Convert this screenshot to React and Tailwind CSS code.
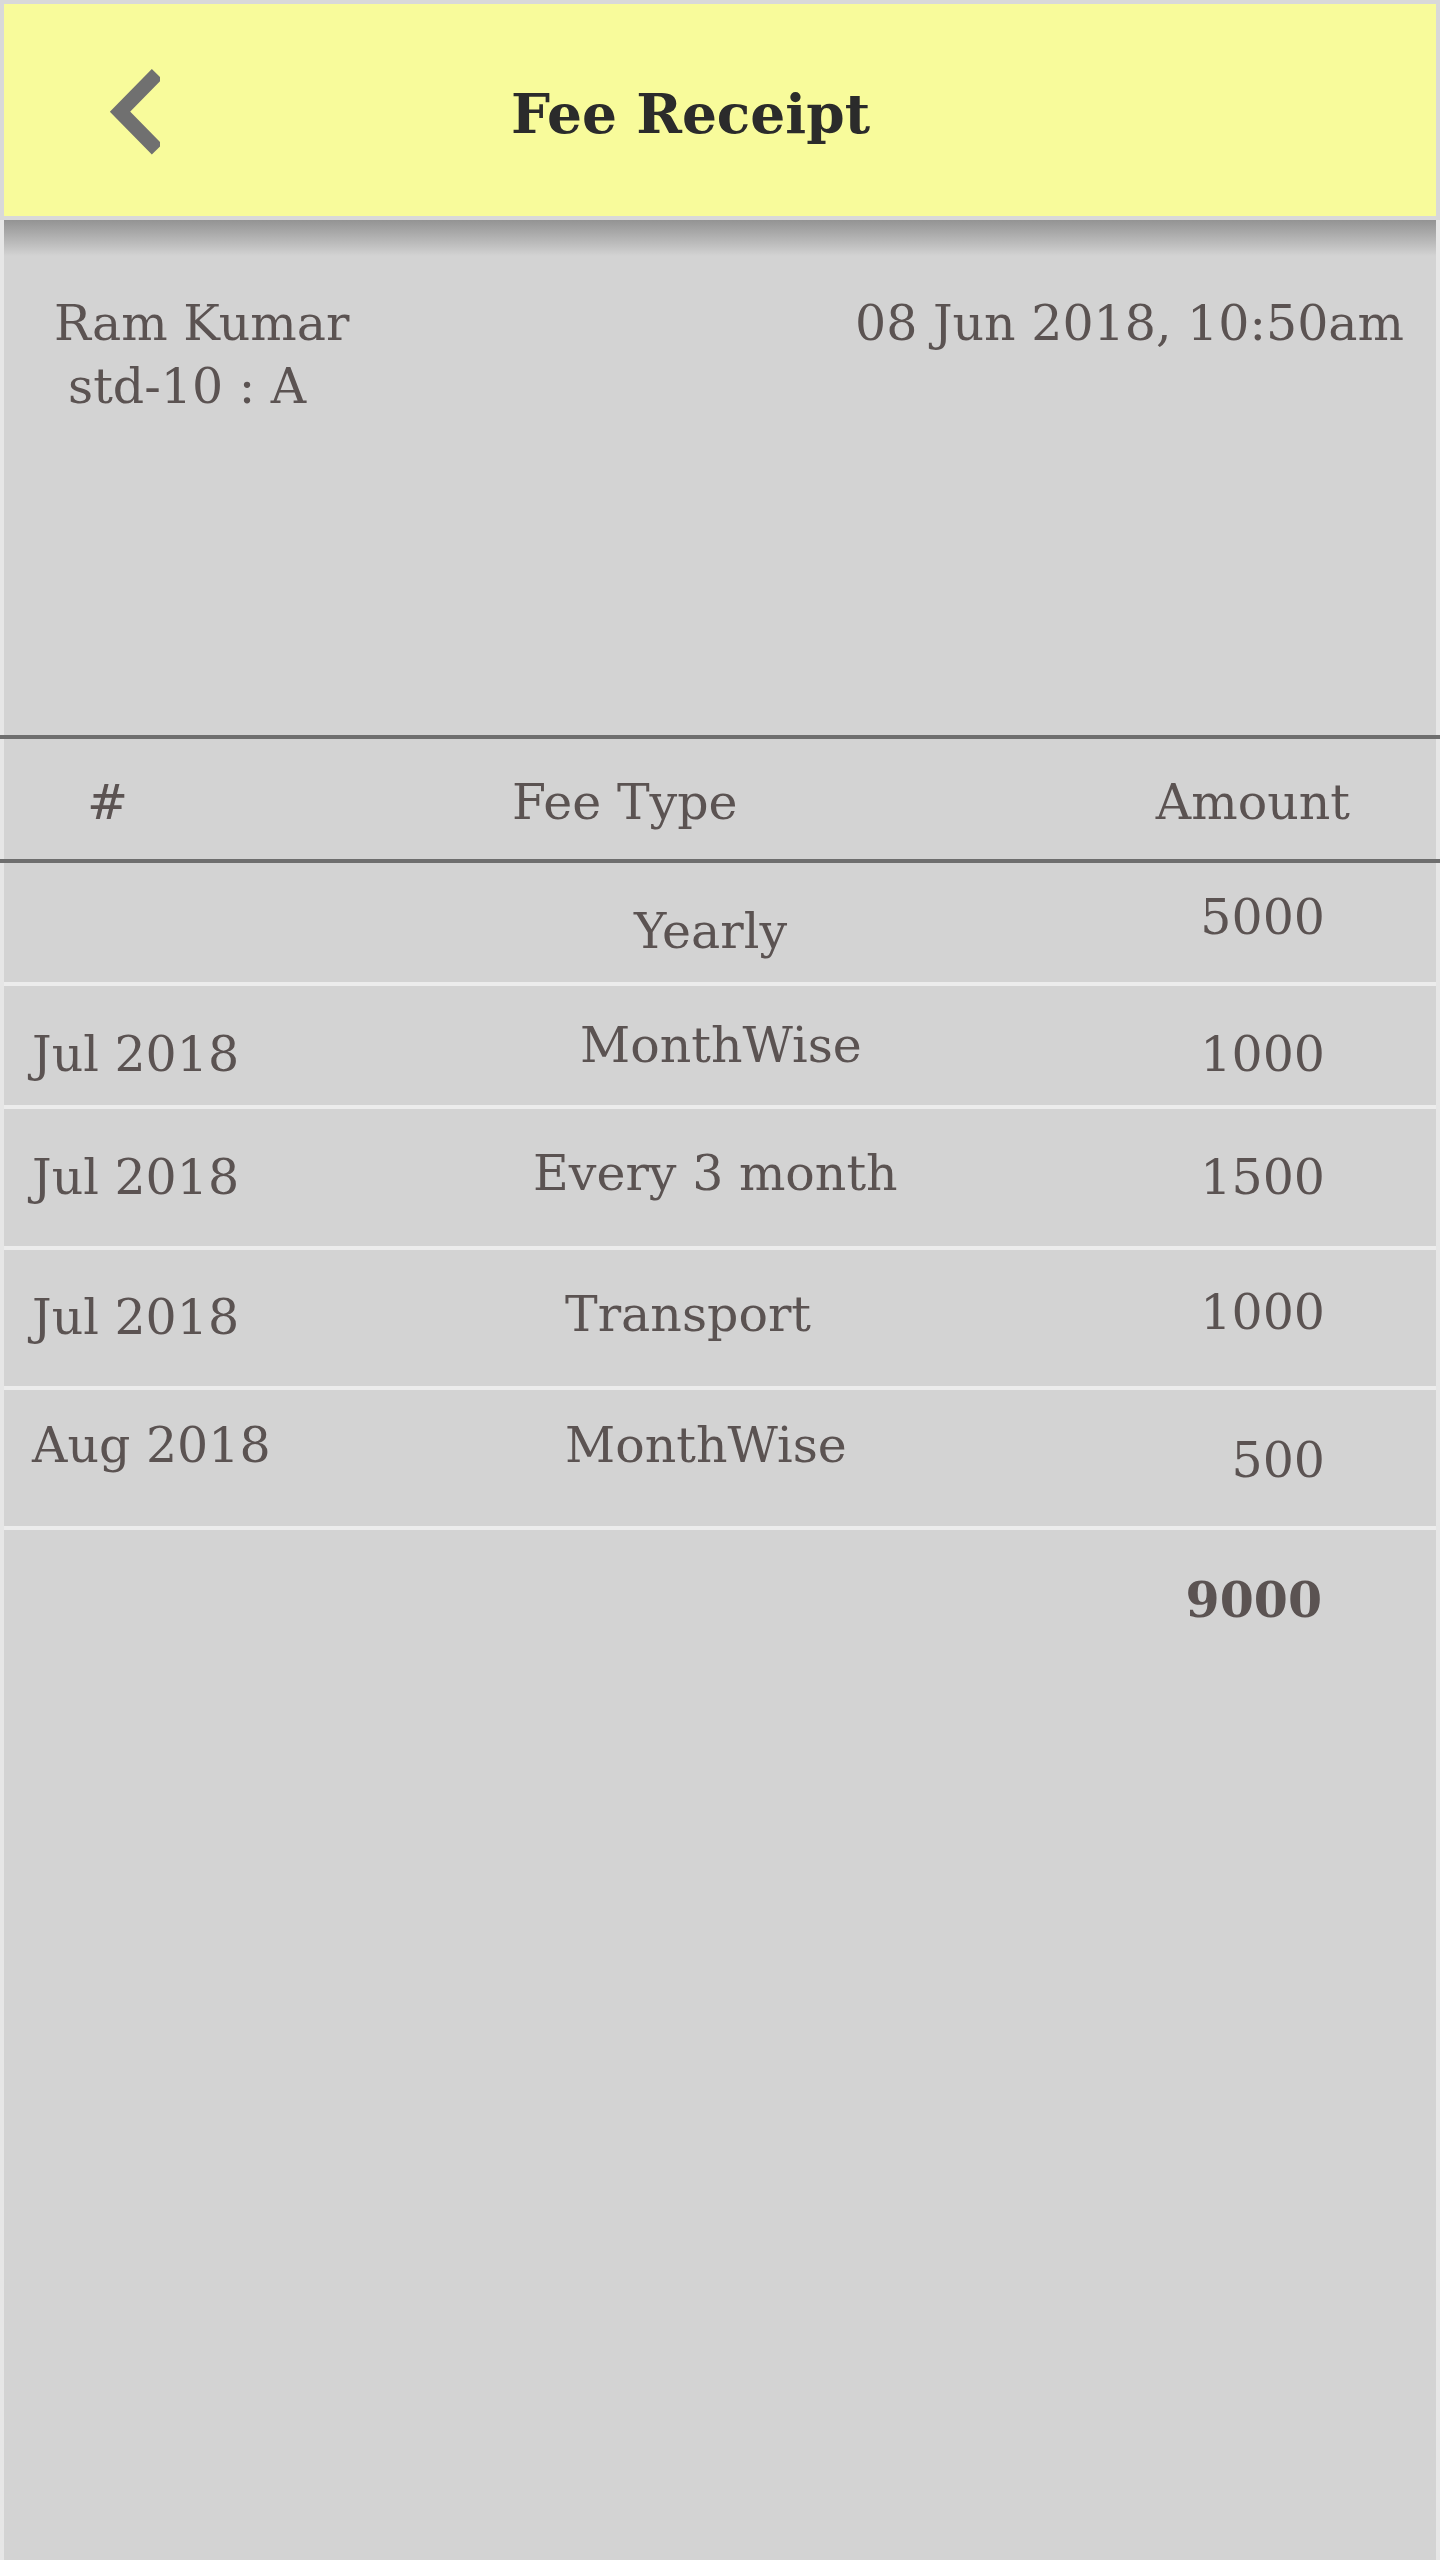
import React from "react";

const rows = [
  { left: "", mid: "Yearly", amt: "5000", h: "h-[119px]", lp: "pt-[44px]", mp: "pt-[44px] pl-[190px]", ap: "pt-[30px]" },
  { left: "Jul 2018", mid: "MonthWise", amt: "1000", h: "h-[119px]", lp: "pt-[44px]", mp: "pt-[35px] pl-[136px]", ap: "pt-[44px]" },
  { left: "Jul 2018", mid: "Every 3 month", amt: "1500", h: "h-[137px]", lp: "pt-[44px]", mp: "pt-[40px] pl-[89px]", ap: "pt-[44px]" },
  { left: "Jul 2018", mid: "Transport", amt: "1000", h: "h-[136px]", lp: "pt-[43px]", mp: "pt-[40px] pl-[121px]", ap: "pt-[38px]" },
  { left: "Aug 2018", mid: "MonthWise", amt: "500", h: "h-[136px]", lp: "pt-[31px]", mp: "pt-[31px] pl-[121px]", ap: "pt-[46px]" },
];

export default function App() {
  return (
    <div className="min-h-[2560px] bg-[#e6e6e6] font-['DejaVu_Serif',serif] text-[#5b5352]">
      {/* Header */}
      <div className="bg-[#d9d9d9] px-[4px] pt-[4px] pb-[4px]">
        <header className="h-[212px] bg-[#f8fb9b] flex items-center">
          <svg
            className="ml-[96px] shrink-0"
            width="60"
            height="100"
            viewBox="0 0 60 100"
            fill="none"
          >
            <polyline
              points="57,14 20,51.7 57,89.4"
              stroke="#707070"
              strokeWidth="14.5"
              strokeLinejoin="miter"
              strokeLinecap="butt"
            />
          </svg>
          <h1 className="ml-[351px] mt-[6px] text-[55px] leading-none font-bold text-[#2b2b2b] whitespace-nowrap">
            Fee Receipt
          </h1>
        </header>
      </div>

      <div className="mx-[4px] bg-[#d3d3d3] min-h-[2340px]">
        {/* shadow */}
        <div className="h-[36px] bg-linear-to-b from-[#939393] to-[#d3d3d3]" />

        {/* Info */}
        <div className="h-[479px] flex justify-between items-start pt-[36px] text-[49px] leading-[63px]">
          <div className="pl-[50px]">
            <div>Ram Kumar</div>
            <div className="pl-[14px]">std-10 : A</div>
          </div>
          <div className="pr-[32px] whitespace-nowrap">08 Jun 2018, 10:50am</div>
        </div>

        {/* Table top line */}
        <div className="-mx-[4px] h-[4px] bg-[#6e6e6e]" />

        {/* Header row */}
        <div className="h-[120px] flex text-[49px] leading-none">
          <div className="w-[440px] pl-[83px] pt-[39px]">#</div>
          <div className="flex-1 pl-[68px] pt-[39px]">Fee Type</div>
          <div className="w-[400px] text-right pr-[86px] pt-[39px]">Amount</div>
        </div>

        <div className="-mx-[4px] h-[4px] bg-[#6e6e6e]" />

        {rows.map((r, i) => (
          <React.Fragment key={i}>
            <div className={`${r.h} flex text-[49px] leading-none whitespace-nowrap`}>
              <div className={`w-[440px] pl-[28px] ${r.lp}`}>{r.left}</div>
              <div className={`flex-1 ${r.mp}`}>{r.mid}</div>
              <div className={`w-[400px] text-right pr-[111px] ${r.ap}`}>{r.amt}</div>
            </div>
            <div className="h-[4px] bg-[#ececec]" />
          </React.Fragment>
        ))}

        {/* Total */}
        <div className="h-[120px] flex text-[49px] leading-none">
          <div className="flex-1" />
          <div className="w-[400px] text-right pr-[114px] pt-[46px] font-bold">9000</div>
        </div>
      </div>
    </div>
  );
}
